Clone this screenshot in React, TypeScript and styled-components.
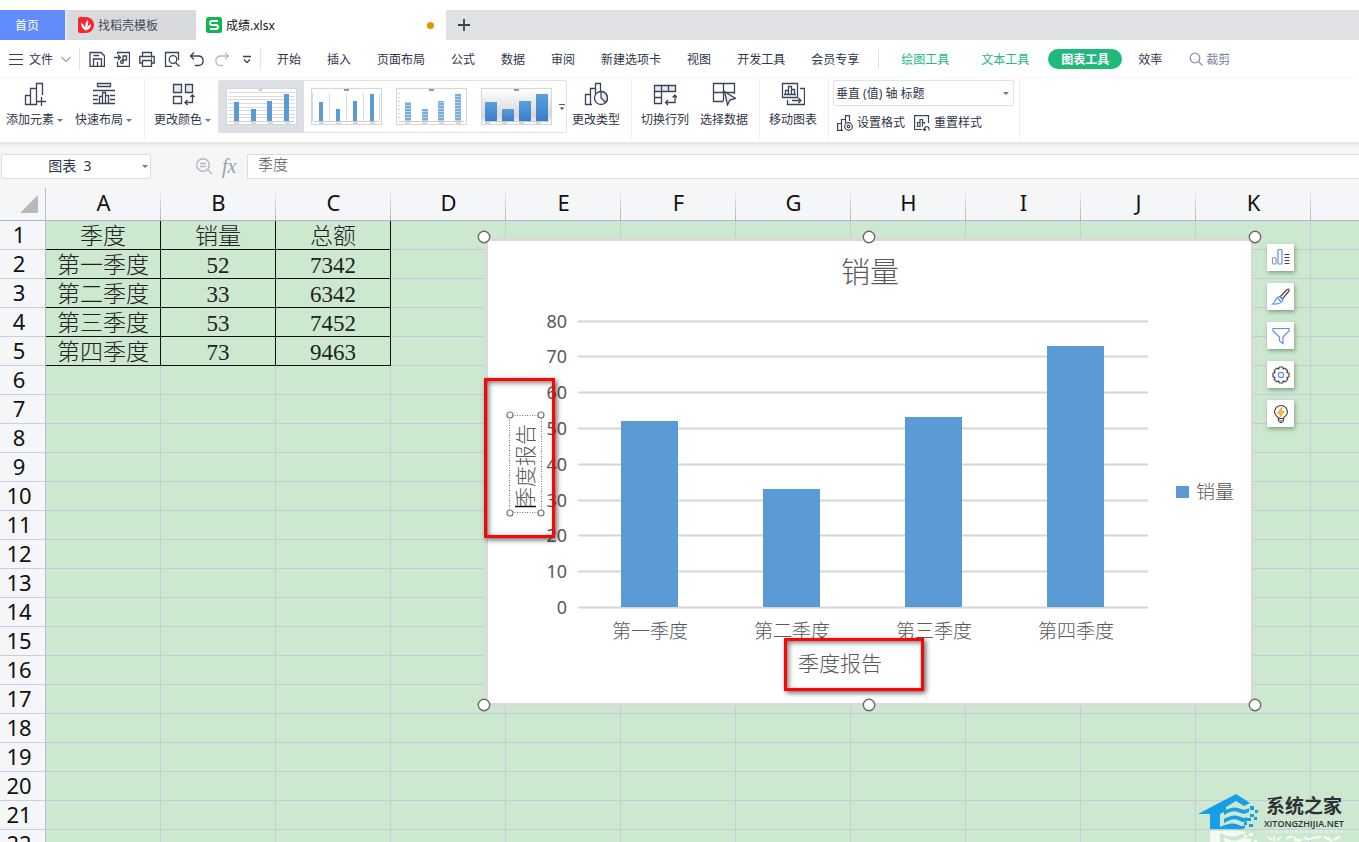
import React from 'react';
import styled, { createGlobalStyle, css } from 'styled-components';

const GlobalStyle = createGlobalStyle`
  *, *::before, *::after { box-sizing: border-box; }
  body {
    margin: 0;
    background: #fff;
    color: #2f3647;
    font-family: "Noto Sans", "Noto Sans CJK SC", sans-serif;
    font-size: 12px;
  }
  button, input, select { font: inherit; color: inherit; }
  button { border: 0; padding: 0; background: none; }
`;

const ui = '"Noto Sans", "Noto Sans CJK SC", sans-serif';
const song = '"Liberation Serif", "Noto Sans CJK SC", serif';

const Page = styled.div`
  display: flex;
  flex-direction: column;
  height: 100vh;
  overflow: hidden;
  padding-top: 10px;
`;

/* ---------- document tabs ---------- */

const TabBar = styled.nav`
  display: flex;
  flex: none;
  height: 30px;
  background: #e1e2e6;
`;

const DocTab = styled.button<{ $kind: 'home' | 'idle' | 'active' }>`
  display: flex;
  align-items: center;
  gap: 4px;
  height: 30px;
  ${p => p.$kind === 'home' && css`
    width: 65px;
    padding-left: 15px;
    margin-right: 3px;
    background: #608dfb;
    color: #fff;
  `}
  ${p => p.$kind === 'idle' && css`
    width: 128px;
    padding-left: 10px;
    background: #d9dadd;
    color: #454a59;
  `}
  ${p => p.$kind === 'active' && css`
    width: 250px;
    padding-left: 10px;
    background: #fff;
    color: #111;
  `}
`;

const UnsavedDot = styled.span`
  width: 7px;
  height: 7px;
  margin: 0 12px 0 auto;
  border-radius: 50%;
  background: #e69500;
`;

const NewTab = styled.button`
  display: grid;
  place-items: center;
  width: 36px;
  height: 30px;
`;

/* ---------- menu row ---------- */

const MenuRow = styled.div`
  display: flex;
  flex: none;
  align-items: center;
  height: 38px;
  white-space: nowrap;
`;

const FileButton = styled.button`
  display: flex;
  align-items: center;
  gap: 6px;
  width: 79px;
  padding-left: 9px;
`;

const Divider = styled.span<{ $h?: number }>`
  flex: none;
  width: 1px;
  height: ${p => p.$h ?? 22}px;
  background: #e2e4e8;
`;

const QuickBar = styled.div`
  display: flex;
  width: 180px;
  padding-left: 4px;
`;

const QuickButton = styled.button`
  display: grid;
  place-items: center;
  width: 25px;
  height: 24px;
`;

const MenuGroup = styled.div<{ $context?: boolean }>`
  display: flex;
  align-items: center;
  padding: 0 6px 0 ${p => (p.$context ? 6 : 3)}px;
`;

const MenuButton = styled.button<{ $tone?: 'green' | 'pill' }>`
  height: 20px;
  padding: 2px 13px 0;
  line-height: 18px;
  ${p => p.$tone === 'green' && css`
    padding: 2px 16px 0;
    color: #21bb7d;
  `}
  ${p => p.$tone === 'pill' && css`
    margin: 0 3px;
    border-radius: 10px;
    background: #1fb97c;
    color: #fff;
    font-weight: 700;
  `}
`;

const SearchButton = styled.button`
  display: flex;
  align-items: center;
  gap: 3px;
  padding-left: 14px;
  color: #7a8195;
`;

/* ---------- ribbon ---------- */

const Ribbon = styled.div`
  display: flex;
  flex: none;
  height: 65px;
  white-space: nowrap;
  border-bottom: 1px solid #e6e7e9;
  box-shadow: 0 1px 3px #d8dadd;
  position: relative;
`;

const Group = styled.div<{ $lead?: boolean }>`
  display: flex;
  gap: ${p => (p.$lead ? 1 : 0)}px;
  height: 61px;
  padding: 0 6px 0 ${p => (p.$lead ? 4 : 0)}px;
  border-right: 1px solid #eeeff1;
`;

const ColorGroup = styled.div`
  display: flex;
  padding: 0 1px 0 3px;
`;

const ToolButton = styled.button<{ $wide?: boolean }>`
  display: flex;
  flex-direction: column;
  align-items: center;
  gap: 5px;
  width: ${p => (p.$wide ? 69 : 58)}px;
  padding-top: 4px;
`;

const ToolLabel = styled.span`
  display: flex;
  align-items: center;
  gap: 3px;
  line-height: 18px;
`;

const Caret = styled.span`
  width: 0;
  height: 0;
  border: 3px solid transparent;
  border-top-color: #6b7690;
  border-bottom: 0;
`;

const Gallery = styled.div`
  display: flex;
  flex: none;
  height: 53px;
  margin-top: 2px;
  border: 1px solid #dfe2e6;
  border-radius: 2px;
`;

const StyleOption = styled.button<{ $on?: boolean }>`
  display: grid;
  place-items: center;
  width: 85px;
  background: ${p => (p.$on ? '#dce0e5' : 'transparent')};
`;

const GalleryMore = styled.button`
  display: grid;
  place-items: center;
  width: 8px;
  margin-left: -1px;
`;

const FormatGroup = styled.div`
  display: flex;
  flex-direction: column;
  width: 191px;
  height: 61px;
  padding: 2px 5px 0 4px;
  border-right: 1px solid #eeeff1;
`;

const SelectWrap = styled.div`
  display: flex;
  align-items: center;
  width: 181px;
  height: 26px;
  border: 1px solid #dfe2e6;
  border-radius: 2px;
  padding-right: 4px;
`;

const ElementSelect = styled.select`
  appearance: none;
  flex: 1;
  height: 24px;
  padding: 0 2px;
  border: 0;
  outline: 0;
  background: transparent;
`;

const FormatRow = styled.div`
  display: flex;
  gap: 9px;
  padding: 7px 0 0 4px;
`;

const SmallTool = styled.button`
  display: flex;
  align-items: center;
  gap: 4px;
  line-height: 20px;
`;

/* ---------- formula bar ---------- */

const FormulaBar = styled.div`
  display: flex;
  flex: none;
  align-items: center;
  height: 45px;
  padding: 1px 0 0 1px;
  background: #f5f6f8;
`;

const NameBox = styled.div`
  display: flex;
  align-items: center;
  width: 150px;
  height: 25px;
  padding-right: 2px;
  border: 1px solid #d9dce1;
  border-radius: 2px;
  background: #fff;
`;

const NameInput = styled.input`
  flex: 1;
  min-width: 0;
  padding: 0 4px 2px 0;
  border: 0;
  outline: 0;
  background: transparent;
  text-align: center;
  font-size: 14px;
`;

const FormulaTools = styled.div`
  display: flex;
  align-items: center;
  gap: 9px;
  width: 96px;
  padding-left: 44px;
`;

const FxLabel = styled.span`
  color: #9a9da5;
  font: italic 20px/22px "Liberation Serif", serif;
`;

const FormulaInput = styled.input`
  flex: 1;
  height: 25px;
  padding: 0 10px 5px;
  border: 1px solid #d9dce1;
  border-right: 0;
  outline: 0;
  background: #fff;
  color: #555;
  font-size: 15px;
  font-weight: 300;
`;

/* ---------- sheet ---------- */

const Sheet = styled.main`
  position: relative;
  flex: 1;
  min-height: 0;
  overflow: hidden;
  background: #cce8cf;
`;

const Grid = styled.table`
  table-layout: fixed;
  width: max-content;
  border-collapse: separate;
  border-spacing: 0;
`;

const Corner = styled.th`
  width: 46px;
  height: 33px;
  padding: 0 7px 7px 0;
  vertical-align: bottom;
  text-align: right;
  background: #f5f6f8;
  border-bottom: 1px solid #a9b4d6;
  border-right: 1px solid #b4bdd8;
  line-height: 0;
`;

const ColHead = styled.th`
  width: 115px;
  min-width: 115px;
  height: 33px;
  padding: 0 0 4px;
  background: linear-gradient(to top, #aab4cf, #f0f2f6) right / 1px 100% no-repeat #f5f6f8;
  border-bottom: 1px solid #a9b4d6;
  color: #111;
  font: 400 22px/28px ${ui};
`;

const RowHead = styled.th`
  width: 46px;
  min-width: 46px;
  height: 29px;
  padding: 0 7px 1px 0;
  background: #f5f6f8;
  border-right: 1px solid #b4bdd8;
  border-bottom: 1px solid #c9cfe0;
  color: #111;
  font: 400 22px/27px ${ui};
`;

const Cell = styled.td<{ $boxed: boolean }>`
  height: 29px;
  padding: 4px 0 0;
  border-right: 1px solid ${p => (p.$boxed ? '#111' : '#c3cbdd')};
  border-bottom: 1px solid ${p => (p.$boxed ? '#111' : '#c3cbdd')};
  color: #222;
  text-align: center;
  font: 300 23px/24px ${song};
`;

/* ---------- floating chart ---------- */

const ChartObject = styled.figure`
  position: absolute;
  left: 485px;
  top: 50px;
  width: 769px;
  height: 468px;
  margin: 0;
  background: #fff;
  border: 3px solid #d9d9d9;
`;

const ChartSvg = styled.svg`
  position: absolute;
  left: -4px;
  top: -4px;
  overflow: visible;
  font-weight: 300;
  font-family: ${ui};
`;

const Callout = styled.div<{ $x: number; $y: number; $w: number; $h: number }>`
  position: absolute;
  left: ${p => p.$x}px;
  top: ${p => p.$y}px;
  width: ${p => p.$w}px;
  height: ${p => p.$h}px;
  border: 3px solid #fb0505;
  box-shadow: 2px 2px 5px rgba(0, 0, 0, 0.6), inset 2px 2px 5px rgba(0, 0, 0, 0.5);
`;

const ChartTools = styled.div`
  position: absolute;
  left: 1267px;
  top: 56px;
  display: flex;
  flex-direction: column;
  gap: 12px;
`;

const ChartTool = styled.button`
  display: grid;
  place-items: center;
  width: 27px;
  height: 27px;
  background: #fff;
  box-shadow: 1px 2px 4px rgba(60, 90, 60, 0.5);
`;

const Brand = styled.div`
  position: absolute;
  right: 15px;
  bottom: 0;
  display: flex;
  align-items: flex-start;
  gap: 5px;
  height: 48px;
  overflow: hidden;
`;

const BrandText = styled.div`
  display: flex;
  flex-direction: column;
  color: #2b3136;
`;

const BrandName = styled.strong`
  padding-left: 2px;
  font: 700 19px/24px ${ui};
`;

const BrandUrl = styled.span`
  font: 600 9px/12px "Open Sans", sans-serif;
`;

/* ---------- icons ---------- */

const Icon = ({ size = 24, w = 1.3, color = '#3b4358', children }: {
  size?: number; w?: number; color?: string; children: React.ReactNode;
}) => (
  <svg width={size} height={size} viewBox={`0 0 ${size} ${size}`} fill="none" stroke={color} strokeWidth={w} aria-hidden="true">
    {children}
  </svg>
);

const quickIcons: { name: string; draw: React.ReactNode; color?: string }[] = [
  { name: '保存', draw: <><path d="M1 1.500H12L15.500 5V15.500H1Z" /><path d="M4.500 15V8H12.500V15M4.500 4.500H10M8.500 15V11" /></> },
  { name: '输出为PDF', draw: <><path d="M3.500 3V1.500H15.500V15.500H3.500V10.500" /><path d="M0 6.500H6M4 4L6.500 6.500L4 9M9 12V5H12.500V9H9M9 9C6 9 6 12.500 8 12.500S9 10 9 9" /></> },
  { name: '打印', draw: <><path d="M3.500 5V1.500H12.500V5M3.500 12H.8V5.500H15.200V12H12.500" /><path d="M3.500 9.500H12.500V15.500H3.500ZM12 7.500H13" /></> },
  { name: '打印预览', draw: <><path d="M8 15.500H1.500V1.500H14.500V8M14.500 8V9" /><circle cx="9" cy="8.500" r="3.800" /><path d="M11.500 11.500L15.500 15.500" /></> },
  { name: '撤销', draw: <path d="M5 1.500L1.500 5L5 8.500M1.500 5H10A4.800 4.800 0 0 1 10 14.500H6" /> },
  { name: '恢复', color: '#b9bcc4', draw: <path d="M11 1.500L14.500 5L11 8.500M14.500 5H6A4.800 4.800 0 0 0 6 14.500H9" /> },
  { name: '更多', draw: <path d="M4 5.500H12M5 8.500L8 11.500L11 8.500" /> },
];

const AddElementIcon = () => (
  <Icon><path d="M2.500 22.500V13.500H7.500V22.500ZM7.500 13.500V6.500H13.500V22.500H7.500M13.500 6.500V1.500H19.500V13M18.500 15V24M14 19.500H23" /></Icon>
);
const QuickLayoutIcon = () => (
  <Icon><path d="M5.500 1.500H18.500V4.500H5.500ZM1 8.500H23M1 13.500H6M1 17.500H6M1 21.500H23M18 13.500H23M18 17.500H23M7.500 21V14.500H10.500V21M10.500 21V10.500H13.500V21M13.500 13.500H16.500V21" /></Icon>
);
const ColorIcon = () => (
  <Icon><path d="M2.500 2.500H10.500V10.500H2.500ZM14.500 2.500H21.500V10.500H14.500Z" fill="#e6e8eb" /><path d="M2.500 14.500H10.500V21.500H2.500ZM21.500 13V20.500H14M19.500 15L21.500 13L23.500 15M16.500 18L14 20.500L16.500 23" /></Icon>
);
const ChangeTypeIcon = () => (
  <Icon><path d="M8 22.500H1.500V12.500H6.500V22.500M6.500 12.500V6.500H11.500V12M11.500 7V1.500H16.500V9" /><circle cx="17" cy="16" r="6.500" fill="#fff" /><path d="M17 9.500V16L21.500 20.500A6.500 6.500 0 0 0 17 9.500Z" fill="#e6e8eb" /></Icon>
);
const SwitchIcon = () => (
  <Icon><path d="M1.500 3.500H22.500V9.500H1.500Z" fill="#e6e8eb" /><path d="M1.500 9.500V21.500H8.500V3.500M15.500 3.500V9.500M1.500 15.500H8.500M22 13V20.500H12.500M19.500 15.500L22 13L24 15.500M15 18L12.500 20.500L15 23" /></Icon>
);
const SelectDataIcon = () => (
  <Icon><path d="M11 19.500H1.500V1.500H22.500V12M1.500 10.500H22.500M11.500 1.500V19.500" /><path d="M12.500 9.500L23.500 16.500L18 18L15.500 23Z" fill="#e6e8eb" /></Icon>
);
const MoveChartIcon = () => (
  <Icon><path d="M1.500 1.500H16.500V15.500H1.500ZM4.500 12.500V8.500H7.500V12.500ZM7.500 12.500V4.500H10.500V12.500ZM10.500 7.500H13.500V12.500H10.500M3 12.500H15M6.500 18V22.500H23.500V6.500H19M11 18.500H20M17.500 16L20 18.500L17.500 21" /></Icon>
);
const FormatIcon = () => (
  <Icon size={16} w={1.2}><path d="M6 15.400H.6V8.500H4.500V15M4.500 8.500V4.500H8.500V8M8.500 4.500V.6H12.500V6" /><circle cx="11.500" cy="11.500" r="3.800" /><circle cx="11.500" cy="11.500" r="1.300" /></Icon>
);
const ResetIcon = () => (
  <Icon size={16} w={1.2}><path d="M8 14.500H.6V.6H14.500V8M3.500 11.500V7.500H6V11.500ZM6 11.500V4.500H8.500V11.500M8.500 7.500H10.500V9M10.500 15V13A2.500 2.500 0 0 1 15 13V15.500M9 14L10.500 15.500L12 14" /></Icon>
);

/* ---------- chart style thumbnails ---------- */

const thumbHeights = [19, 12, 20, 27];
const thumbKinds = [
  { width: 5, start: 8, fill: '#5b9bd5' },
  { width: 4, start: 8, fill: '#5b9bd5' },
  { width: 6, start: 9, fill: 'url(#stripe)' },
  { width: 12, start: 4, fill: 'url(#deep)' },
];

const Thumb = ({ kind }: { kind: number }) => {
  const { width, start, fill } = thumbKinds[kind];
  return (
    <svg width="71" height="37" viewBox="0 0 71 37" aria-hidden="true">
      <defs>
        <linearGradient id="fade" x1="0" y1="0" x2="0" y2="1">
          <stop offset="0" stopColor="#fff" /><stop offset="0.75" stopColor="#d8d8d8" /><stop offset="1" stopColor="#fff" />
        </linearGradient>
        <linearGradient id="deep" x1="0" y1="0" x2="0" y2="1">
          <stop offset="0" stopColor="#5b9fdd" /><stop offset="1" stopColor="#377fc7" />
        </linearGradient>
        <pattern id="stripe" width="4" height="3" patternUnits="userSpaceOnUse">
          <rect width="4" height="3" fill="#b5d1ee" /><rect width="4" height="2" fill="#79aee0" />
        </pattern>
      </defs>
      <rect x=".5" y=".5" width="70" height="36" fill={kind === 3 ? 'url(#fade)' : '#fff'} stroke="#d3d6da" />
      {kind === 0 && [4, 8, 11, 15, 19, 22, 26, 29].map(y => <path key={y} d={`M2 ${y + 0.5}H69`} stroke="#dadada" />)}
      {kind === 1 && [1, 18, 35, 52, 68].map(x => <path key={x} d={`M${x + 0.5} 5V33`} stroke="#dadada" />)}
      {kind === 2 && [5, 9, 13, 17, 21, 25, 29].map(y => <path key={y} d={`M2 ${y + 0.5}H4`} stroke="#ccc" />)}
      <rect x="33" y="1" width={kind ? 5 : 3} height="2" fill={kind ? '#9c9696' : '#c9c9c9'} />
      <path d="M3 33.500H68" stroke="#cdcdcd" />
      {thumbHeights.map((h, i) => (
        <g key={h}>
          <rect x={start + i * 17 - (kind === 0 || kind === 2 ? Math.round(i / 3) : 0)} y={33 - h} width={width} height={h} fill={fill} />
          <path d={`M${start + i * 17} 35H${start + i * 17 + 5}`} stroke="#bdb5a5" />
        </g>
      ))}
    </svg>
  );
};

/* ---------- data ---------- */

const menus = ['开始', '插入', '页面布局', '公式', '数据', '审阅', '新建选项卡', '视图', '开发工具', '会员专享'];
const columns = 'ABCDEFGHIJK'.split('');
const rowCount = 22;
const records = [
  ['季度', '销量', '总额'],
  ['第一季度', '52', '7342'],
  ['第二季度', '33', '6342'],
  ['第三季度', '53', '7452'],
  ['第四季度', '73', '9463'],
];

const ink = '#595959';
const axis = { left: 94, right: 664, zero: 370, unit: 3.58 };
const ticks = [0, 10, 20, 30, 40, 50, 60, 70, 80];
const yOf = (v: number) => Math.round(axis.zero - v * axis.unit);

const SalesChart = () => (
  <ChartSvg width="771" height="468" viewBox="0 0 771 468" role="img" aria-label="销量">
    <text x="386" y="46" fontSize="29" textAnchor="middle" fill={ink}>销量</text>
    {ticks.map(t => (
      <g key={t}>
        <path d={`M${axis.left} ${yOf(t) + 0.5}H${axis.right}`} stroke="#d6d6d6" strokeWidth="2" />
        <text x="83" y={yOf(t) + 7} fontSize="18" textAnchor="end" fill={ink} fontWeight="400">{t}</text>
      </g>
    ))}
    {records.slice(1).map(([name, sold], i) => {
      const value = Number(sold);
      return (
        <g key={name}>
          <rect x={137 + i * 142} y={yOf(value)} width="57" height={axis.zero - yOf(value)} fill="#5b9bd5" />
          <text x={166 + i * 142} y="401" fontSize="19" textAnchor="middle" fill={ink}>{name}</text>
        </g>
      );
    })}
    <text x="314" y="434" fontSize="21" fill={ink}>季度报告</text>
    <rect x="692" y="249" width="13" height="12" fill="#5b9bd5" />
    <text x="712" y="262" fontSize="19" fill={ink}>销量</text>
    <text transform="translate(49 271) rotate(-90)" fontSize="21" fill={ink}>季度报告</text>
    <path d="M31 269.500H52" stroke="#111" strokeWidth="1.500" />
    <rect x="25.500" y="178.500" width="32" height="97" fill="none" stroke="#777" strokeDasharray="1 1.500" />
    {[[26, 178], [57, 178], [26, 276], [57, 276]].map(([x, y]) => (
      <circle key={`${x}-${y}`} cx={x} cy={y} r="3" fill="#fff" stroke="#777" strokeWidth="1.200" />
    ))}
    {[[0, 0], [385, 0], [771, 0], [0, 468], [385, 468], [771, 468]].map(([x, y]) => (
      <circle key={`${x}-${y}`} cx={x} cy={y} r="5.700" fill="#fff" stroke="#6a6a6a" strokeWidth="1.400" />
    ))}
  </ChartSvg>
);

const sideTools: { name: string; draw: React.ReactNode }[] = [
  { name: '图表元素', draw: <><rect x="1.500" y="9.500" width="3.500" height="6.500" rx="1" stroke="#999" /><rect x="7" y="1.500" width="4" height="14.500" rx="1" stroke="#5b8ff0" /><path d="M13.500 6.500H18.500M13.500 9.500H18.500M13.500 12.500H18.500M13.500 15.500H18.500" /></> },
  { name: '图表样式', draw: <><path d="M9 10L16 2.500Q18.500 1 18 4L11.500 12Z" /><path d="M9 9.500L12 12.500Q11 17.500 1.500 17Q4 15.500 4.500 13Q6 9.500 9 9.500ZM6.500 11L10 14.500" stroke="#5b8ff0" /></> },
  { name: '筛选', draw: <path d="M2 2.500H18V5L12 11V17.500L8.500 15V11L2 5Z" stroke="#5b8ff0" /> },
  { name: '设置', draw: <><path d="M8.300 2H11.700L12.200 4L14 3.200L16.700 5.700L16 7.700L18 8.300V11.700L16 12.300L16.800 14.200L14.300 16.800L12.300 16L11.700 18H8.300L7.700 16L5.700 16.800L3.200 14.300L4 12.300L2 11.700V8.300L4 7.700L3.200 5.800L5.700 3.200L7.700 4Z" /><circle cx="10" cy="10" r="2.600" stroke="#5b8ff0" /></> },
  { name: '智能推荐', draw: <><path d="M7.500 14.500C7 12.500 3.500 11.500 3.500 8A6.500 6.500 0 0 1 16.500 8C16.500 11.500 13 12.500 12.500 14.500ZM7.500 14.500V17H12.500V14.500M8.500 18.500H11.500" /><path d="M10.500 3.500L6.500 9.500H9.500L8.500 13.500L13.500 7.500H10.500Z" fill="#ffc72e" stroke="#e79a1c" strokeWidth=".8" /></> },
];

const House = ({ fill }: { fill: string }) => (
  <g fill={fill}>
    <path d="M0 20L38 0L52 9L46 12L38 7L28 13V17L22 20V35H12V20Z" />
    <path d="M26 17Q36 11 43 15Q47 17 51 14V18Q46 21 41 18.500Q35 15 26 21ZM26 25Q36 19 43 23Q46 25 49 23V27Q45 29 41 26.500Q35 23 26 29ZM22 33Q34 27 41 31Q44 33 47 31V34Q43 36 39 35H22Z" />
    <path d="M52 12H56V16H52ZM57 16H60V19H57ZM52 20H56V23H52ZM49 24H53V27H49ZM56 23H59V26H56ZM51 30H55V33H51ZM46 28H49V31H46Z" />
  </g>
);

export default function App() {
  return (
    <Page>
      <GlobalStyle />
      <TabBar>
        <DocTab $kind="home">首页</DocTab>
        <DocTab $kind="idle">
          <svg width="16" height="16" viewBox="0 0 16 16" aria-hidden="true">
            <path d="M3 0H8A8 8 0 0 1 8 16H2Q0 16 0 14V2Q0 0 3 0Z" fill="#f8242f" />
            <path d="M7 13Q3 11 3 6Q6 7 7 11Q7 5 10 3Q11 8 8 12Q10 8 13 7Q13 12 8 13.500Z" fill="#fff" />
          </svg>
          <span>找稻壳模板</span>
        </DocTab>
        <DocTab $kind="active">
          <svg width="16" height="16" viewBox="0 0 16 16" aria-hidden="true">
            <rect width="16" height="16" rx="2.500" fill="#12b453" />
            <path d="M12 4H6Q4 4 4 6T6 8H10Q12 8 12 10T10 12H4" fill="none" stroke="#fff" strokeWidth="1.800" />
          </svg>
          <span>成绩.xlsx</span>
          <UnsavedDot />
        </DocTab>
        <NewTab aria-label="新建">
          <Icon size={14} w={1.8}><path d="M7 1V13M1 7H13" /></Icon>
        </NewTab>
      </TabBar>

      <MenuRow>
        <FileButton>
          <Icon size={14} w={1.2}><path d="M0 2.500H14M0 7.500H14M0 12.500H14" /></Icon>
          <span>文件</span>
          <Icon size={14} w={1.2} color="#9a9fab"><path d="M2.500 5L7 9.500L11.500 5" /></Icon>
        </FileButton>
        <Divider />
        <QuickBar>
          {quickIcons.map(q => (
            <QuickButton key={q.name} aria-label={q.name}>
              <Icon size={16} color={q.color}>{q.draw}</Icon>
            </QuickButton>
          ))}
        </QuickBar>
        <Divider />
        <MenuGroup>
          {menus.map(m => <MenuButton key={m}>{m}</MenuButton>)}
        </MenuGroup>
        <Divider $h={20} />
        <MenuGroup $context>
          <MenuButton $tone="green">绘图工具</MenuButton>
          <MenuButton $tone="green">文本工具</MenuButton>
          <MenuButton $tone="pill">图表工具</MenuButton>
          <MenuButton>效率</MenuButton>
          <SearchButton>
            <Icon size={14} color="#8b92a5"><circle cx="6" cy="6" r="4.800" /><path d="M9.500 9.500L13.500 13.500" /></Icon>
            <span>裁剪</span>
          </SearchButton>
        </MenuGroup>
      </MenuRow>

      <Ribbon>
        <Group>
          <ToolButton $wide><AddElementIcon /><ToolLabel>添加元素<Caret /></ToolLabel></ToolButton>
          <ToolButton $wide><QuickLayoutIcon /><ToolLabel>快速布局<Caret /></ToolLabel></ToolButton>
        </Group>
        <ColorGroup>
          <ToolButton $wide><ColorIcon /><ToolLabel>更改颜色<Caret /></ToolLabel></ToolButton>
        </ColorGroup>
        <Gallery>
          {[0, 1, 2, 3].map(k => (
            <StyleOption key={k} $on={k === 0} aria-label={`样式 ${k + 1}`}><Thumb kind={k} /></StyleOption>
          ))}
          <GalleryMore aria-label="更多样式">
            <Icon size={8} w={1} color="#4d5a78"><path d="M1 1.500H7" /><path d="M1.500 4.500H6.500L4 7Z" fill="#4d5a78" stroke="none" /></Icon>
          </GalleryMore>
        </Gallery>
        <Group>
          <ToolButton><ChangeTypeIcon /><ToolLabel>更改类型</ToolLabel></ToolButton>
        </Group>
        <Group $lead>
          <ToolButton><SwitchIcon /><ToolLabel>切换行列</ToolLabel></ToolButton>
          <ToolButton><SelectDataIcon /><ToolLabel>选择数据</ToolLabel></ToolButton>
        </Group>
        <Group $lead>
          <ToolButton><MoveChartIcon /><ToolLabel>移动图表</ToolLabel></ToolButton>
        </Group>
        <FormatGroup>
          <SelectWrap>
            <ElementSelect aria-label="图表元素" defaultValue="axis">
              <option value="axis">垂直 (值) 轴 标题</option>
            </ElementSelect>
            <Caret />
          </SelectWrap>
          <FormatRow>
            <SmallTool><FormatIcon />设置格式</SmallTool>
            <SmallTool><ResetIcon />重置样式</SmallTool>
          </FormatRow>
        </FormatGroup>
      </Ribbon>

      <FormulaBar>
        <NameBox>
          <NameInput aria-label="名称框" defaultValue="图表  3" />
          <Caret />
        </NameBox>
        <FormulaTools>
          <Icon size={18} w={1.4} color="#b3b6bd"><circle cx="8" cy="8" r="6.300" /><path d="M12.500 12.500L17 17M5 6.500H11M5 9.500H11" /></Icon>
          <FxLabel>fx</FxLabel>
        </FormulaTools>
        <FormulaInput aria-label="编辑栏" defaultValue="季度" />
      </FormulaBar>

      <Sheet>
        <Grid>
          <thead>
            <tr>
              <Corner aria-label="全选">
                <svg width="18" height="18" viewBox="0 0 18 18" aria-hidden="true"><path d="M18 0V18H0Z" fill="#b9b9b9" /></svg>
              </Corner>
              {columns.map(c => <ColHead key={c} scope="col">{c}</ColHead>)}
              <ColHead />
            </tr>
          </thead>
          <tbody>
            {Array.from({ length: rowCount }, (_, r) => (
              <tr key={r}>
                <RowHead scope="row">{r + 1}</RowHead>
                {columns.map((c, i) => (
                  <Cell key={c} $boxed={r < 5 && i < 3}>{records[r]?.[i]}</Cell>
                ))}
                <Cell $boxed={false} />
              </tr>
            ))}
          </tbody>
        </Grid>

        <ChartObject><SalesChart /></ChartObject>
        <Callout $x={484} $y={190} $w={71} $h={160} />
        <Callout $x={784} $y={450} $w={140} $h={53} />

        <ChartTools>
          {sideTools.map(t => (
            <ChartTool key={t.name} aria-label={t.name}>
              <Icon size={20} w={1.2} color="#444">{t.draw}</Icon>
            </ChartTool>
          ))}
        </ChartTools>

        <Brand>
          <svg width="61" height="49" viewBox="0 0 61 49" aria-hidden="true">
            <House fill="#159fe6" />
            <g transform="translate(0 72) scale(1 -1)" opacity="0.8"><House fill="#fff" /></g>
          </svg>
          <BrandText>
            <BrandName>系统之家</BrandName>
            <BrandUrl>XITONGZHIJIA.NET</BrandUrl>
            <svg width="80" height="12" viewBox="0 0 80 12" fill="none" stroke="#fff" aria-hidden="true">
              <path d="M1 1.500H79" strokeWidth="3" strokeDasharray="3 2" opacity="0.35" />
              <path d="M4 7L8 10M17 7L13 10M10 6V11M22 9L25 7H29M31 7V10L36 11M40 7Q44 11 48 8L57 7M60 7L66 10L64 7M69 10L76 7M30 10H38" strokeWidth="2" opacity="0.85" />
            </svg>
          </BrandText>
        </Brand>
      </Sheet>
    </Page>
  );
}
